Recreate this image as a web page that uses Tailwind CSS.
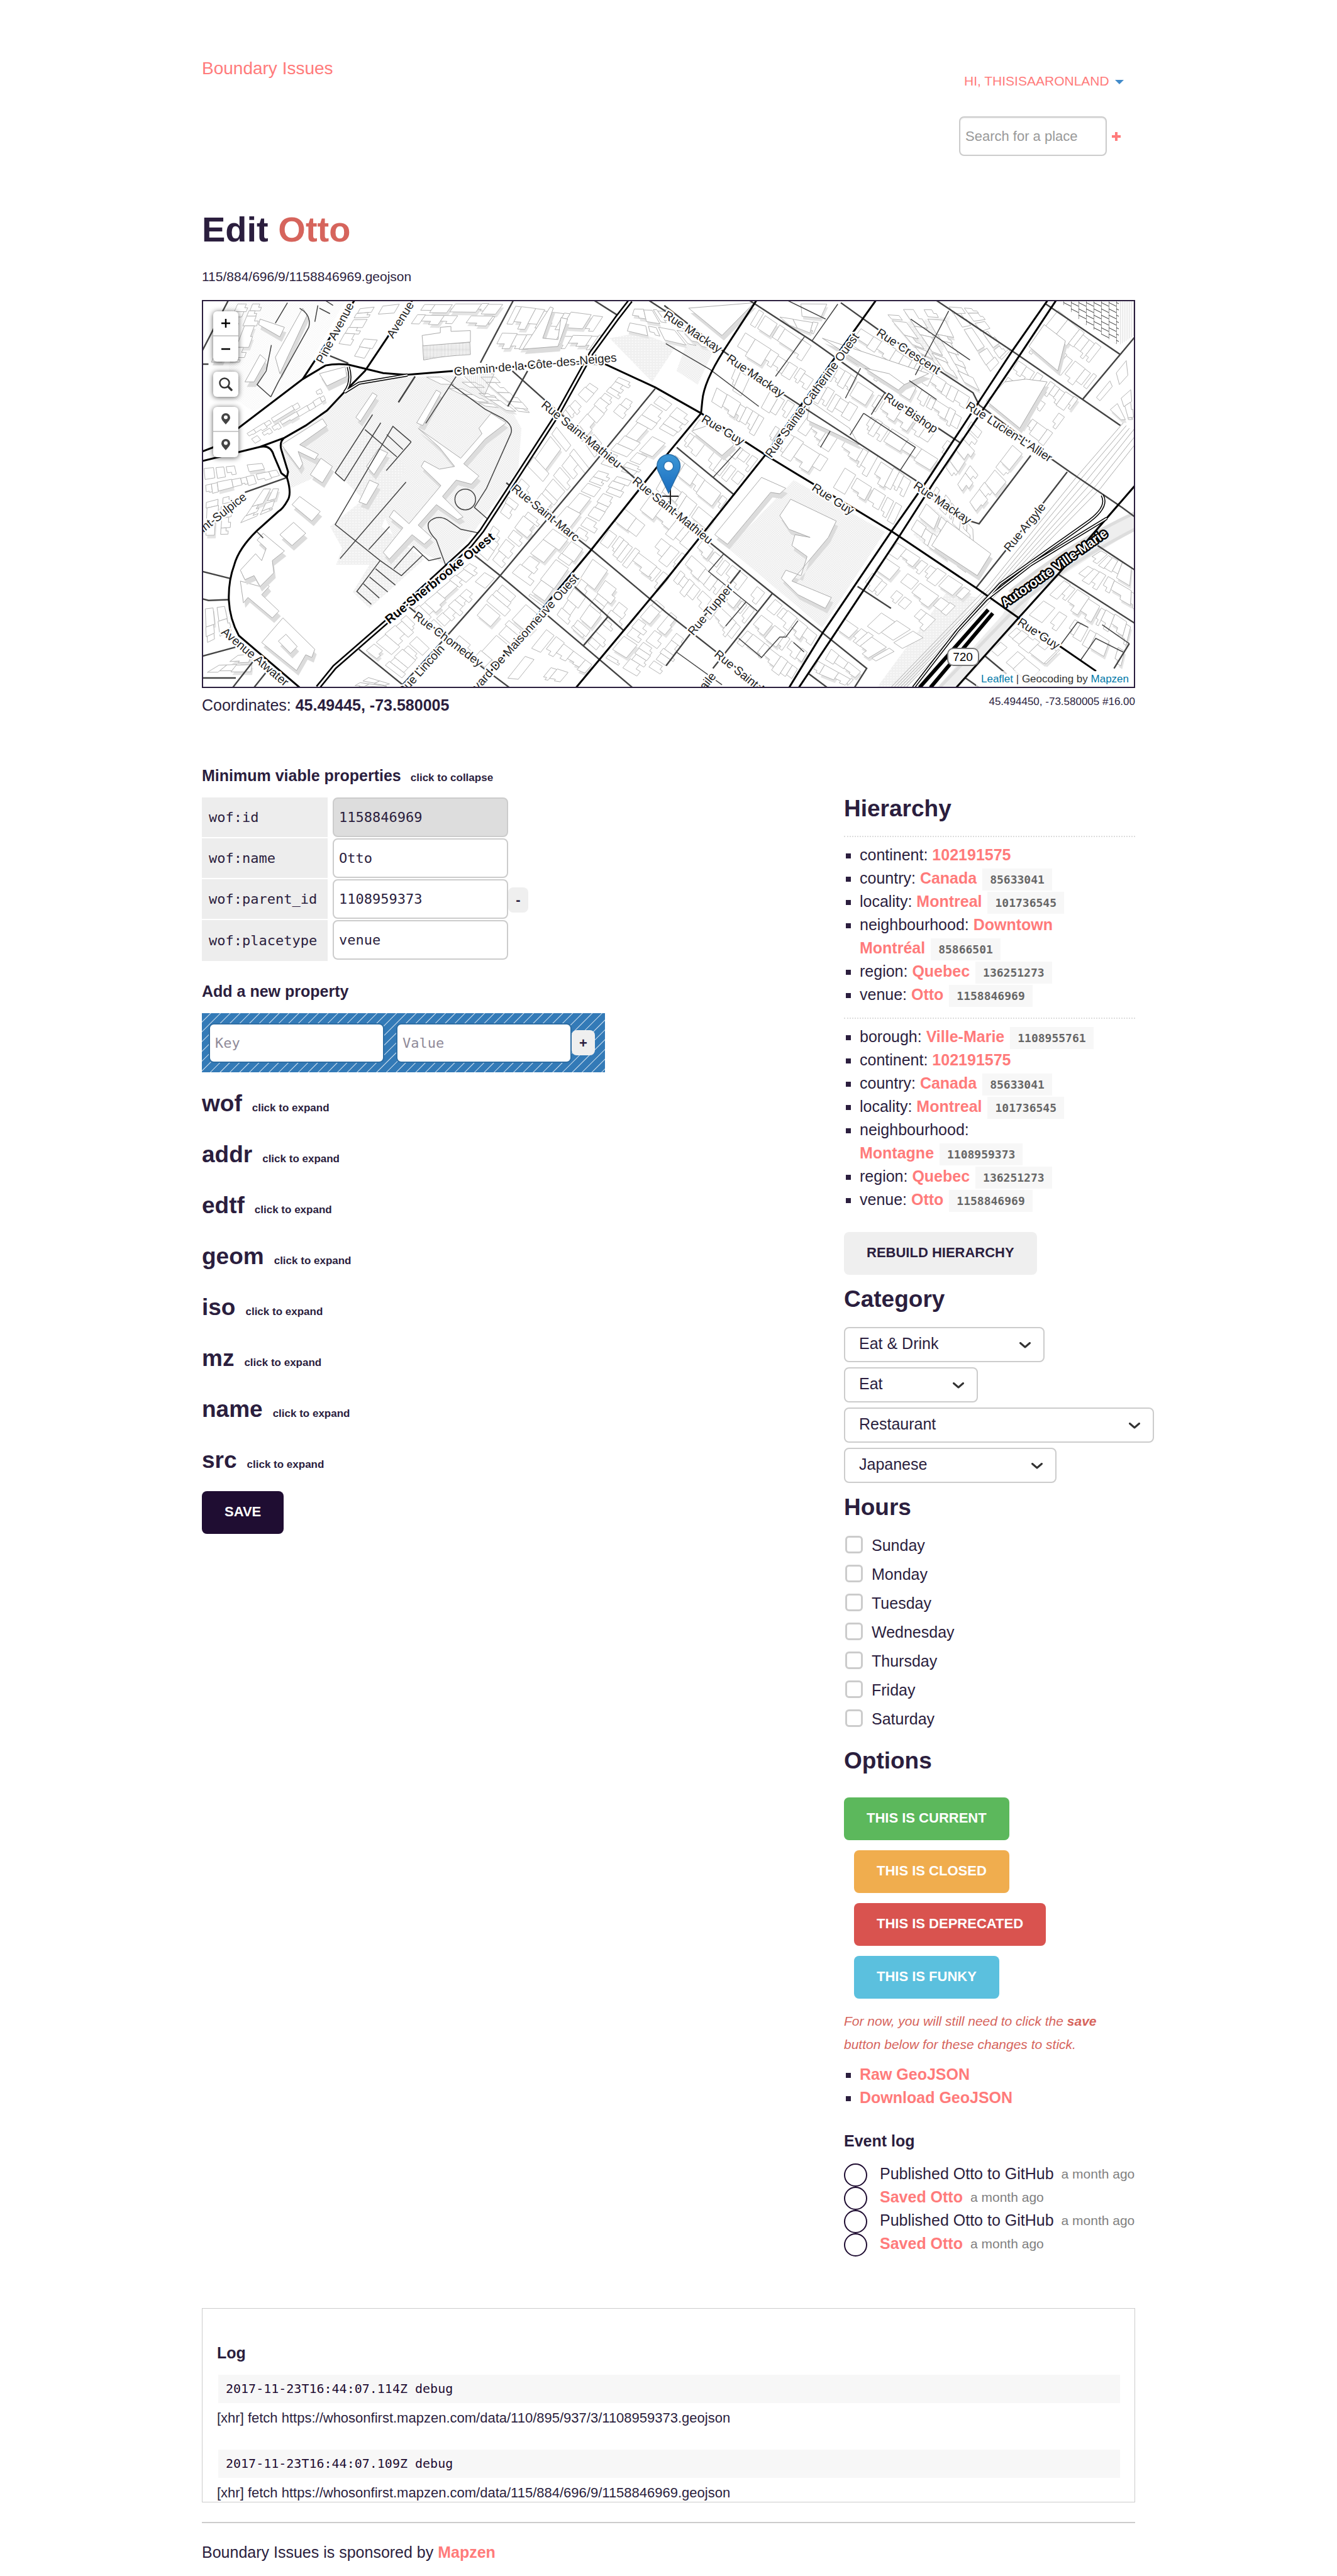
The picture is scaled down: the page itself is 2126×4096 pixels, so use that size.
<!DOCTYPE html>
<html lang="en">
<head>
<meta charset="utf-8">
<meta name="viewport" content="width=device-width, initial-scale=1">
<title>Boundary Issues: Edit Otto</title>
<script src="https://cdn.jsdelivr.net/npm/@tailwindcss/browser@4"></script>
</head>
<body class="bg-white font-['Liberation_Sans',Arial,sans-serif] text-[25px] leading-[37px] text-[#2b1e3e]">
<div class="mx-auto w-full max-w-[1484px] pb-4">

  <header class="flex items-start justify-between pt-[90px]">
    <a href="#" class="text-[28px] text-[#ff7b7b]">Boundary Issues</a>
    <div class="mt-5 w-[280px]">
      <button type="button" class="ml-2 flex items-center gap-[9px] text-[21px] text-[#ff7b7b]">HI, THISISAARONLAND
        <svg width="14" height="7" viewBox="0 0 14 7" class="mt-1" aria-hidden="true"><path d="M0 0h14L7 7z" fill="#428bca"/></svg>
      </button>
      <form class="mt-[38px] flex items-center gap-2">
        <input type="text" aria-label="Search for a place" placeholder="Search for a place" class="h-[63px] w-[235px] rounded-lg border-2 border-[#ccc] px-2 text-[22px] shadow-[inset_0_1px_2px_rgba(0,0,0,0.1)] placeholder:text-[#999]">
        <a href="#" aria-label="Add a place"><svg width="14" height="14" viewBox="0 0 14 14"><path d="M7 0v14M0 7h14" stroke="#ff7b7b" stroke-width="4"/></svg></a>
      </form>
    </div>
  </header>

  <h1 class="mt-20 text-[56px] font-bold leading-[74px]">Edit <span class="text-[#d6645c]">Otto</span></h1>
  <p class="mt-[19px] text-[21px] leading-[37px]">115/884/696/9/1158846969.geojson</p>

  <div class="relative mt-[19px] h-[617px] overflow-hidden border-2 border-[#2b1e3e]">
    <svg class="absolute inset-0 h-full w-full" aria-label="Street map of downtown Montreal" role="img">
      <defs>
        <pattern id="dots" width="8" height="8" patternUnits="userSpaceOnUse"><rect width="8" height="8" fill="#ebebeb"/><circle cx="2" cy="2" r="2" fill="#fff"/><circle cx="6" cy="6" r="2" fill="#fff"/></pattern>
        <pattern id="specks" width="8" height="8" patternUnits="userSpaceOnUse"><circle cx="2" cy="2" r="1.2" fill="#ddd"/><circle cx="6" cy="6" r="1.2" fill="#ddd"/></pattern>
        <pattern id="tiles" width="10" height="10" patternUnits="userSpaceOnUse"><rect width="10" height="10" fill="#f0f0f0"/><rect x="3" y="3" width="5" height="3" fill="#fff"/></pattern>
        <pattern id="mesh" width="5" height="5" patternUnits="userSpaceOnUse"><path d="M0 0h5M0 0v5" stroke="#888" stroke-width="1"/></pattern>
        <pattern id="hatch" width="3" height="4" patternUnits="userSpaceOnUse"><path d="M0 0v4" stroke="#bbb" stroke-width="1"/></pattern>
        <pattern id="grid" width="12" height="10" patternUnits="userSpaceOnUse"><path d="M0 0v10M0 2l12 6" stroke="#333" stroke-width="1"/></pattern>
        <linearGradient id="pin" x1="0" y1="0" x2="0" y2="1"><stop offset="0" stop-color="#3d97d6"/><stop offset="1" stop-color="#1a6cbf"/></linearGradient>
      </defs>

      <!-- parks and campus grounds -->
      <g transform="matrix(.4832 0 0 .4339 -6 -15)">
        <path fill="url(#specks)" d="M90 32H480L380 230L330 320L180 440L100 380Z"/>
        <path fill="url(#dots)" d="M480 370L545 320L850 305L1020 420L1060 500L1050 650L890 900L810 1000L640 900L560 700L440 650L300 720L270 560L420 440Z"/>
        <path fill="url(#tiles)" d="M560 500L680 640L600 860L740 980L560 1160L505 1100L560 1000L450 1000L470 940L430 860L540 760L440 650Z"/>
        <path fill="url(#tiles)" d="M1350 170L1450 150L1568 200L1490 330L1420 250Z"/>
        <path fill="url(#dots)" d="M1956 690L2256 880L2050 1230L1740 940Z"/>
        <path fill="url(#dots)" d="M1610 170L1690 220L1640 340L1570 290Z"/>
        <path fill="url(#tiles)" d="M2400 780L2470 840L2390 930L2350 890Z"/>
        <path fill="url(#tiles)" d="M2460 1100L2560 1120L2330 1450H2230Z"/>
        <path fill="url(#tiles)" d="M2330 110L2470 90L2440 260L2380 240Z"/>
      </g>
      <g id="buildings"></g>
      <g transform="matrix(.4832 0 0 .4339 -6 -15)" fill="#fff" stroke="#aaa" stroke-width="1">
        <path vector-effect="non-scaling-stroke" fill="url(#mesh)" d="M735 195L890 185L892 230Q800 235 738 250Z"/>
        <path vector-effect="non-scaling-stroke" d="M733 160L793 150V130L828 127V145L892 142V184L736 198Z"/>
        <path vector-effect="non-scaling-stroke" fill="url(#hatch)" d="M868 305L970 300L938 380Z"/>
      </g>
      <!-- larger buildings, each with a soft drop edge -->
      <g id="blocks"></g>
      <path fill="url(#grid)" d="M1362 0H1456V70L1400 35Z"/>
      <path fill="url(#hatch)" d="M1456 0H1480V55L1456 70Z"/>

      <!-- rail lines and freeway apron -->
      <g transform="matrix(.4832 0 0 .4339 736 -15)" fill="none">
        <path stroke="#eee" stroke-width="26" vector-effect="non-scaling-stroke" d="M1560 830Q1350 960 1180 1100L1130 1200L920 1460"/>
        <path stroke="#ddd" stroke-width="5" vector-effect="non-scaling-stroke" d="M1543 870Q1300 1010 1160 1150L900 1450M1543 810Q1330 920 1130 1100"/>
        <g stroke="#aaa" stroke-width="1">
          <path vector-effect="non-scaling-stroke" d="M1505 480L1350 680L1060 1080L740 1450"/><path vector-effect="non-scaling-stroke" d="M1515 490L1370 680L1070 1085L750 1450"/><path vector-effect="non-scaling-stroke" d="M1525 500L1385 690L1080 1085L760 1450"/><path vector-effect="non-scaling-stroke" d="M1543 500L1400 700L1090 1085L770 1450"/><path vector-effect="non-scaling-stroke" d="M1543 530L1415 710L1095 1090L780 1450"/><path vector-effect="non-scaling-stroke" d="M1543 560L1430 720L1100 1095L790 1450"/>
        </g>
      </g>

      <!-- lanes -->
      <g transform="matrix(.4832 0 0 .4339 -6 -15)" fill="none" stroke="#444" stroke-width="1.5">
        <path vector-effect="non-scaling-stroke" d="M845 310L745 482M830 340L940 430L1000 465Q1035 490 1025 520L945 720L905 790L948 832M570 450L447 663L477 693L597 480M545 505L650 605M617 523L670 578M697 550L615 655M697 550L637 493L447 853L595 985L665 1040L735 965L755 985L795 975M680 697L463 978M626 860L557 945M595 985L518 1098L566 1145M540 1070L592 1122M560 1045L620 1100M580 1015L645 1075M640 1015L705 933L735 965M810 1000L780 910Q745 870 755 845Q780 815 815 835L860 870L925 885"/>
        <ellipse vector-effect="non-scaling-stroke" cx="875" cy="761" rx="34" ry="38"/>
        <path vector-effect="non-scaling-stroke" d="M330 60Q370 85 360 130L260 330L235 385M290 40L250 115M237 195L220 290L190 340L235 385M430 80L395 60M415 32L440 50M390 50L380 110M190 880L210 902M1535 190L1681 285L1841 420M1991 165L1896 310M2176 280L2126 390M2186 445L2141 525M2186 445L2356 570L2306 655M2256 370L2211 450M2101 45L2016 180M1936 32L2061 100M2341 100L2536 250M2466 70L2356 305M2336 325L2426 395M2076 510L2044 570M1781 570L1691 680M1726 960L1676 1025L1836 1170M1800 1135L1732 1225M1775 1270L1850 1340L1910 1265L1930 1265L1970 1205M1955 1285L1990 1320M2971 1220L3061 1290M2890 1210L2830 1300M2890 1210L2925 1230M2900 1350L2950 1270L3040 1320M1570 1320L1720 1440"/>
      </g>
      <!-- local streets -->
      <g transform="matrix(.4832 0 0 .4339 -6 -15)" fill="none" stroke="#444" stroke-width="2.4">
        <path vector-effect="non-scaling-stroke" d="M1033 32L925 260M1300 32L1375 85M1030 290L1135 395L1435 685L1681 920L1886 1105L2051 1250L2196 1380L2156 1450M1010 700L1290 945L1536 1175L1696 1315L1850 1450M905 965L990 1040L1150 1190L1425 1450M1235 1080L1395 1240M1345 1190L1265 1295M1500 355L1290 640L990 1040L800 1280L660 1450M525 1310L680 1450M690 1155L930 1375L1020 1450M710 310L655 405M1080 290L1015 420M1480 32L1560 90"/>
        <path vector-effect="non-scaling-stroke" d="M10 215L95 32M10 265L30 265M10 1025L100 1050M10 1125L30 1131L95 1128M10 1335L120 1302M150 735L285 682M110 1450L180 1350M180 1450L230 1380M10 1415L120 1415M430 235L490 262"/>
        <path vector-effect="non-scaling-stroke" d="M1811 32L2016 180L2256 370L2506 555M1530 50L1721 215L1921 375L2356 690L2536 840L2566 850L2736 600M2111 40L2236 140L2436 290L2546 370L2566 415L2801 610L2871 665L3036 790L3079 825M2426 32L2686 225L3031 490M2786 45L3031 230M3079 165L2906 395M2856 660L2766 790L2556 1085M1571 570L1761 745M1886 1105L1690 1380M1781 1020L1611 1260L1536 1370M2166 1080L2276 1160M2006 1400L2066 1450M2826 1035L3079 1215M2956 930L3079 1020M2586 1335L2656 1400M2521 1415L2566 1450M3060 1290L3010 1380"/>
      </g>
      <!-- main streets -->
      <g transform="matrix(.4832 0 0 .4339 -6 -15)" fill="none" stroke="#000" stroke-width="3">
        <path vector-effect="non-scaling-stroke" d="M10 585L45 570L340 320L415 270Q450 262 490 267L605 298L680 304L840 290L1200 262L1335 265L1500 350L1651 445L1866 600L2281 880L2556 1085L2696 1195L2951 1390"/>
        <path vector-effect="non-scaling-stroke" d="M10 620L200 568L280 535L350 490L420 435L475 370L545 290L700 32M340 320L510 32M200 568Q235 560 245 600L270 665L288 680M280 535Q262 550 270 580L292 660L288 680Q305 740 290 765Q275 795 260 805L190 875Q130 940 115 1000Q95 1060 97 1130Q100 1200 130 1260L330 1450"/>
        <path vector-effect="non-scaling-stroke" d="M1833 32L1726 215Q1660 330 1655 400L1651 445L1536 600L1290 945L915 1450M2226 32L1861 600L1661 880L1536 1055L1240 1450M3079 710L2826 1035L2696 1195L2491 1450M2791 32L2676 215L2396 690L2276 880L2051 1250L1941 1450M2819 32L2701 230L2416 700L2301 900L2081 1270L1973 1450"/>
      </g>
      <!-- divided roads: black casing with a white centre -->
      <g transform="matrix(.4832 0 0 .4339 -6 -15)" fill="none">
        <path stroke="#000" stroke-width="8" vector-effect="non-scaling-stroke" d="M1419 32L1375 95L1290 225L1178 450L1015 730L930 875L890 930L615 1210L445 1375L390 1450"/>
        <path stroke="#fff" stroke-width="3" vector-effect="non-scaling-stroke" d="M1419 32L1375 95L1290 225L1178 450L1015 730L930 875L890 930L615 1210L445 1375L390 1450"/>
        <path stroke="#000" stroke-width="5" vector-effect="non-scaling-stroke" d="M490 275Q505 330 478 368L525 335L685 305M2971 745Q2995 790 2916 850L2636 1070L2496 1240L2350 1450M2986 830L2736 1000L2586 1130"/>
        <path stroke="#fff" stroke-width="2" vector-effect="non-scaling-stroke" d="M490 275Q505 330 478 368L525 335L685 305M2971 745Q2995 790 2916 850L2636 1070L2496 1240L2350 1450M2986 830L2736 1000L2586 1130"/>
        <path stroke="#000" stroke-width="6" vector-effect="non-scaling-stroke" d="M2596 1165L2370 1450M2611 1178L2406 1450"/>
      </g>

      <!-- street names -->
      <g font-size="19" text-anchor="middle" fill="#222" stroke="#fff" stroke-width="5" stroke-linejoin="round" paint-order="stroke">
        <text transform="translate(209 50) rotate(-62)" dy="7">Pine Avenue</text>
        <text transform="translate(313 29) rotate(-58)" dy="7">Avenue</text>
        <text transform="translate(528 100) rotate(-5)" dy="7">Chemin de la Côte-des-Neiges</text>
        <text transform="translate(602 211) rotate(39)" dy="7">Rue Saint-Mathieu</text>
        <text transform="translate(747 332) rotate(39)" dy="7">Rue Saint-Mathieu</text>
        <text transform="translate(545 336) rotate(39)" dy="7">Rue Saint-Marc</text>
        <text transform="translate(390 537) rotate(37)" dy="7">Rue Chomedey</text>
        <text transform="translate(346 586) rotate(-48)" dy="7">Rue Lincoln</text>
        <text transform="translate(593 436) rotate(-48)" dy="7" text-anchor="end">Boulevard De Maisonneuve Ouest</text>
        <text transform="translate(83 565) rotate(40)" dy="7">Avenue Atwater</text>
        <text transform="translate(66 308) rotate(-38)" dy="7" text-anchor="end">Chemin Saint-Sulpice</text>
        <text transform="translate(779 48) rotate(33)" dy="7">Rue Mackay</text>
        <text transform="translate(879 118) rotate(34)" dy="7">Rue Mackay</text>
        <text transform="translate(1176 320) rotate(34)" dy="7">Rue Mackay</text>
        <text transform="translate(968 149) rotate(-54)" dy="7">Rue Sainte-Catherine Ouest</text>
        <text transform="translate(1122 79) rotate(33)" dy="7">Rue Crescent</text>
        <text transform="translate(1126 177) rotate(34)" dy="7">Rue Bishop</text>
        <text transform="translate(827 204) rotate(31)" dy="7">Rue Guy</text>
        <text transform="translate(1002 314) rotate(33)" dy="7">Rue Guy</text>
        <text transform="translate(1329 528) rotate(33)" dy="7">Rue Guy</text>
        <text transform="translate(1282 207) rotate(33)" dy="7">Rue Lucien-L'Allier</text>
        <text transform="translate(1306 359) rotate(-51)" dy="7">Rue Argyle</text>
        <text transform="translate(806 490) rotate(-50)" dy="7">Rue Tupper</text>
        <text transform="translate(816 558) rotate(39)" dy="7" text-anchor="start">Rue Saint-Marc</text>
        <text transform="translate(811 592) rotate(-52)" dy="7" text-anchor="end">Rue Baile</text>
        <g font-weight="bold" font-size="20">
          <text transform="translate(376 440) rotate(-39)" dy="7" fill="#000">Rue Sherbrooke Ouest</text>
          <text transform="translate(1353 424) rotate(-35)" dy="7" fill="#fff" stroke="#000">Autoroute Ville-Marie</text>
        </g>
      </g>
      <rect x="1184" y="552" width="49" height="27" rx="9" fill="#fff" stroke="#777" stroke-width="2"/>
      <text x="1208" y="572" font-size="19" text-anchor="middle" fill="#000">720</text>

      <path d="M743 297v26M730 310h26" stroke="#222" stroke-width="2"/>
      <g transform="translate(721 243) scale(1.53)">
        <path d="M12.500 .5C5.800.5.500 5.800.500 12.500c0 2.800 1.100 5.300 2.200 7.400L12.500 40.500l9.800-20.600c1.100-2.100 2.200-4.600 2.200-7.400C24.500 5.800 19.200.5 12.500.5z" fill="url(#pin)" stroke="#2a6ea8" stroke-width="1"/>
        <circle cx="12.500" cy="12.500" r="5" fill="#fff" stroke="#2a74b3"/>
      </g>
    </svg>

    <div class="absolute left-4 top-4 flex w-10 flex-col gap-4 text-black">
      <div class="flex flex-col divide-y-2 divide-[#ccc] rounded-md bg-white shadow-[0_1px_8px_rgba(0,0,0,0.65)]">
        <button type="button" aria-label="Zoom in" class="flex h-10 items-center justify-center"><svg width="14" height="14" viewBox="0 0 14 14"><path d="M7 0v14M0 7h14" stroke="#000" stroke-width="2.500"/></svg></button>
        <button type="button" aria-label="Zoom out" class="flex h-10 items-center justify-center"><svg width="14" height="14" viewBox="0 0 14 14"><path d="M0 7h14" stroke="#000" stroke-width="2.500"/></svg></button>
      </div>
      <button type="button" aria-label="Search the map" class="flex h-10 items-center justify-center rounded-md bg-white shadow-[0_1px_8px_rgba(0,0,0,0.65)]"><svg width="22" height="22" viewBox="0 0 22 22" fill="none" stroke="#333"><circle cx="9" cy="9" r="7.500" stroke-width="2.500"/><path d="M15 15l5 5" stroke-width="3.500" stroke-linecap="round"/></svg></button>
      <div class="flex flex-col divide-y-2 divide-[#ccc] rounded-md bg-white shadow-[0_1px_8px_rgba(0,0,0,0.65)]">
        <button type="button" aria-label="Drop a pin" class="flex h-10 items-center justify-center"><svg width="14" height="18" viewBox="0 0 14 18"><path fill="#444" fill-rule="evenodd" d="M7 0a7 7 0 0 1 7 7c0 4-4 7-7 11C4 14 0 11 0 7a7 7 0 0 1 7-7zm0 3.500a3 3 0 1 0 0 6 3 3 0 0 0 0-6z"/></svg></button>
        <button type="button" aria-label="Move the pin" class="flex h-10 items-center justify-center"><svg width="14" height="18" viewBox="0 0 14 18"><path fill="#444" fill-rule="evenodd" d="M7 0a7 7 0 0 1 7 7c0 4-4 7-7 11C4 14 0 11 0 7a7 7 0 0 1 7-7zm0 3.500a3 3 0 1 0 0 6 3 3 0 0 0 0-6z"/></svg></button>
      </div>
    </div>
    <p class="absolute bottom-0 right-0 bg-white/70 px-2 text-[17px] leading-[25px] text-[#333]"><a href="#" class="text-[#0078a8]">Leaflet</a> | Geocoding by <a href="#" class="text-[#0078a8]">Mapzen</a></p>
  </div>

  <div class="mt-[9px] flex items-start justify-between">
    <p>Coordinates: <strong>45.49445, -73.580005</strong></p>
    <p class="text-[17px] leading-[26px]">45.494450, -73.580005 #16.00</p>
  </div>

  <main class="mt-[75px] flex items-start justify-between">
    <form>
      <h2 class="flex items-baseline gap-[15px] font-bold">Minimum viable properties <button type="button" class="text-[17px] leading-none">click to collapse</button></h2>
      <table class="mt-4 border-separate border-spacing-0 text-[22px] leading-[37px]">
        <tbody class="font-['DejaVu_Sans_Mono',monospace]">
          <tr>
            <th scope="row" class="w-[200px] border-b-2 border-white bg-[#ededed] p-0 px-[11px] text-left font-normal"><label for="p1">wof:id</label></th>
            <td class="p-0 pb-0.5 pl-2"><input id="p1" value="1158846969" readonly class="block h-[63px] w-[279px] rounded-lg border-2 border-[#ccc] bg-[#ddd] px-2"></td>
            <td class="p-0"></td>
          </tr>
          <tr>
            <th scope="row" class="w-[200px] border-b-2 border-white bg-[#ededed] p-0 px-[11px] text-left font-normal"><label for="p2">wof:name</label></th>
            <td class="p-0 pb-0.5 pl-2"><input id="p2" value="Otto" class="block h-[63px] w-[279px] rounded-lg border-2 border-[#ccc] px-2"></td>
            <td class="p-0"></td>
          </tr>
          <tr>
            <th scope="row" class="w-[200px] border-b-2 border-white bg-[#ededed] p-0 px-[11px] text-left font-normal"><label for="p3">wof:parent_id</label></th>
            <td class="p-0 pb-0.5 pl-2"><input id="p3" value="1108959373" class="block h-[63px] w-[279px] rounded-lg border-2 border-[#ccc] px-2"></td>
            <td class="p-0"><button type="button" aria-label="Remove wof:parent_id" class="block h-10 w-8 rounded-lg bg-[#efefef] font-['Liberation_Sans',Arial,sans-serif] text-[22px] font-bold">-</button></td>
          </tr>
          <tr>
            <th scope="row" class="w-[200px] bg-[#ededed] p-0 px-[11px] text-left font-normal"><label for="p4">wof:placetype</label></th>
            <td class="p-0 pb-0.5 pl-2"><input id="p4" value="venue" class="block h-[63px] w-[279px] rounded-lg border-2 border-[#ccc] px-2"></td>
            <td class="p-0"></td>
          </tr>
        </tbody>
      </table>

      <h2 class="mt-[30px] font-bold">Add a new property</h2>
      <div class="mt-4 flex h-[94px] w-[641px] items-center bg-[#337ab7] bg-[repeating-linear-gradient(135deg,transparent_0px,transparent_9px,rgba(255,255,255,0.8)_10px,transparent_11px)] pl-[11px] text-[22px]">
        <input aria-label="Key" placeholder="Key" class="h-[63px] w-[279px] rounded-lg border-2 border-[#2d6da3] bg-white px-2 font-['DejaVu_Sans_Mono',monospace] placeholder:text-[#8f8a99]">
        <input aria-label="Value" placeholder="Value" class="ml-[19px] h-[63px] w-[279px] rounded-lg border-2 border-[#2d6da3] bg-white px-2 font-['DejaVu_Sans_Mono',monospace] placeholder:text-[#8f8a99]">
        <button type="button" aria-label="Add property" class="h-10 w-[37px] rounded-lg bg-[#efefef] font-bold">+</button>
      </div>

      <div class="mt-[27px] flex flex-col gap-9 text-[37px] font-bold leading-[45px]">
        <h3 class="flex items-baseline gap-4">wof <button type="button" class="text-[17px] leading-none">click to expand</button></h3>
        <h3 class="flex items-baseline gap-4">addr <button type="button" class="text-[17px] leading-none">click to expand</button></h3>
        <h3 class="flex items-baseline gap-4">edtf <button type="button" class="text-[17px] leading-none">click to expand</button></h3>
        <h3 class="flex items-baseline gap-4">geom <button type="button" class="text-[17px] leading-none">click to expand</button></h3>
        <h3 class="flex items-baseline gap-4">iso <button type="button" class="text-[17px] leading-none">click to expand</button></h3>
        <h3 class="flex items-baseline gap-4">mz <button type="button" class="text-[17px] leading-none">click to expand</button></h3>
        <h3 class="flex items-baseline gap-4">name <button type="button" class="text-[17px] leading-none">click to expand</button></h3>
        <h3 class="flex items-baseline gap-4">src <button type="button" class="text-[17px] leading-none">click to expand</button></h3>
      </div>
      <button type="submit" class="mt-[27px] h-[68px] rounded-lg bg-[#1f0d32] px-9 pb-1 text-[22px] font-bold text-white">SAVE</button>
    </form>

    <aside class="w-[463px] shrink-0 pt-12">
      <h2 class="text-[37px] font-bold leading-[45px]">Hierarchy</h2>
      <ul class="mt-[21px] list-[square] border-t-2 border-dotted border-[#ddd] pb-[18px] pl-[25px] pr-4 pt-[10px]">
        <li>continent: <a href="#" class="font-bold text-[#ff7b7b]">102191575</a></li>
        <li>country: <a href="#" class="font-bold text-[#ff7b7b]">Canada</a>&nbsp;<code class="ml-0.5 bg-[#f7f7f7] px-3 py-[7px] font-['DejaVu_Sans_Mono',monospace] text-lg/[20px] font-bold text-[#666]">85633041</code></li>
        <li>locality: <a href="#" class="font-bold text-[#ff7b7b]">Montreal</a>&nbsp;<code class="ml-0.5 bg-[#f7f7f7] px-3 py-[7px] font-['DejaVu_Sans_Mono',monospace] text-lg/[20px] font-bold text-[#666]">101736545</code></li>
        <li>neighbourhood: <a href="#" class="font-bold text-[#ff7b7b]">Downtown Montréal</a>&nbsp;<code class="ml-0.5 bg-[#f7f7f7] px-3 py-[7px] font-['DejaVu_Sans_Mono',monospace] text-lg/[20px] font-bold text-[#666]">85866501</code></li>
        <li>region: <a href="#" class="font-bold text-[#ff7b7b]">Quebec</a>&nbsp;<code class="ml-0.5 bg-[#f7f7f7] px-3 py-[7px] font-['DejaVu_Sans_Mono',monospace] text-lg/[20px] font-bold text-[#666]">136251273</code></li>
        <li>venue: <a href="#" class="font-bold text-[#ff7b7b]">Otto</a>&nbsp;<code class="ml-0.5 bg-[#f7f7f7] px-3 py-[7px] font-['DejaVu_Sans_Mono',monospace] text-lg/[20px] font-bold text-[#666]">1158846969</code></li>
      </ul>
      <ul class="list-[square] border-t-2 border-dotted border-[#ddd] pl-[25px] pr-4 pt-[10px]">
        <li>borough: <a href="#" class="font-bold text-[#ff7b7b]">Ville-Marie</a>&nbsp;<code class="ml-0.5 bg-[#f7f7f7] px-3 py-[7px] font-['DejaVu_Sans_Mono',monospace] text-lg/[20px] font-bold text-[#666]">1108955761</code></li>
        <li>continent: <a href="#" class="font-bold text-[#ff7b7b]">102191575</a></li>
        <li>country: <a href="#" class="font-bold text-[#ff7b7b]">Canada</a>&nbsp;<code class="ml-0.5 bg-[#f7f7f7] px-3 py-[7px] font-['DejaVu_Sans_Mono',monospace] text-lg/[20px] font-bold text-[#666]">85633041</code></li>
        <li>locality: <a href="#" class="font-bold text-[#ff7b7b]">Montreal</a>&nbsp;<code class="ml-0.5 bg-[#f7f7f7] px-3 py-[7px] font-['DejaVu_Sans_Mono',monospace] text-lg/[20px] font-bold text-[#666]">101736545</code></li>
        <li>neighbourhood: <a href="#" class="font-bold text-[#ff7b7b]">Montagne</a>&nbsp;<code class="ml-0.5 bg-[#f7f7f7] px-3 py-[7px] font-['DejaVu_Sans_Mono',monospace] text-lg/[20px] font-bold text-[#666]">1108959373</code></li>
        <li>region: <a href="#" class="font-bold text-[#ff7b7b]">Quebec</a>&nbsp;<code class="ml-0.5 bg-[#f7f7f7] px-3 py-[7px] font-['DejaVu_Sans_Mono',monospace] text-lg/[20px] font-bold text-[#666]">136251273</code></li>
        <li>venue: <a href="#" class="font-bold text-[#ff7b7b]">Otto</a>&nbsp;<code class="ml-0.5 bg-[#f7f7f7] px-3 py-[7px] font-['DejaVu_Sans_Mono',monospace] text-lg/[20px] font-bold text-[#666]">1158846969</code></li>
      </ul>
      <button type="button" class="mt-[33px] block h-[68px] rounded-lg bg-[#efefef] px-9 pb-1 text-[22px] font-bold">REBUILD HIERARCHY</button>

      <h2 class="mt-4 text-[37px] font-bold leading-[45px]">Category</h2>
      <div class="mt-[22px] flex flex-col items-start gap-2">
        <div class="relative"><select aria-label="Category" class="block h-14 w-[319px] appearance-none rounded-lg border-2 border-[#ccc] bg-white pb-1 pl-[22px] pr-14"><option>Eat &amp; Drink</option></select><svg class="pointer-events-none absolute right-[22px] top-6" width="18" height="10" viewBox="0 0 18 10" fill="none" stroke="#333" stroke-width="3" stroke-linecap="round" stroke-linejoin="round"><path d="M1.500 1.500L9 8l7.500-6.500"/></svg></div>
        <div class="relative"><select aria-label="Subcategory" class="block h-14 w-[213px] appearance-none rounded-lg border-2 border-[#ccc] bg-white pb-1 pl-[22px] pr-14"><option>Eat</option></select><svg class="pointer-events-none absolute right-[22px] top-6" width="18" height="10" viewBox="0 0 18 10" fill="none" stroke="#333" stroke-width="3" stroke-linecap="round" stroke-linejoin="round"><path d="M1.500 1.500L9 8l7.500-6.500"/></svg></div>
        <div class="relative"><select aria-label="Venue type" class="block h-14 w-[493px] appearance-none rounded-lg border-2 border-[#ccc] bg-white pb-1 pl-[22px] pr-14"><option>Restaurant</option></select><svg class="pointer-events-none absolute right-[22px] top-6" width="18" height="10" viewBox="0 0 18 10" fill="none" stroke="#333" stroke-width="3" stroke-linecap="round" stroke-linejoin="round"><path d="M1.500 1.500L9 8l7.500-6.500"/></svg></div>
        <div class="relative"><select aria-label="Cuisine" class="block h-14 w-[338px] appearance-none rounded-lg border-2 border-[#ccc] bg-white pb-1 pl-[22px] pr-14"><option>Japanese</option></select><svg class="pointer-events-none absolute right-[22px] top-6" width="18" height="10" viewBox="0 0 18 10" fill="none" stroke="#333" stroke-width="3" stroke-linecap="round" stroke-linejoin="round"><path d="M1.500 1.500L9 8l7.500-6.500"/></svg></div>
      </div>

      <h2 class="mt-4 text-[37px] font-bold leading-[45px]">Hours</h2>
      <div class="mt-[15px] flex flex-col pl-0.5 leading-[46px]">
        <label class="flex items-start gap-3.5"><input type="checkbox" class="mt-2 size-7 appearance-none rounded-md border-3 border-[#ccc]">Sunday</label>
        <label class="flex items-start gap-3.5"><input type="checkbox" class="mt-2 size-7 appearance-none rounded-md border-3 border-[#ccc]">Monday</label>
        <label class="flex items-start gap-3.5"><input type="checkbox" class="mt-2 size-7 appearance-none rounded-md border-3 border-[#ccc]">Tuesday</label>
        <label class="flex items-start gap-3.5"><input type="checkbox" class="mt-2 size-7 appearance-none rounded-md border-3 border-[#ccc]">Wednesday</label>
        <label class="flex items-start gap-3.5"><input type="checkbox" class="mt-2 size-7 appearance-none rounded-md border-3 border-[#ccc]">Thursday</label>
        <label class="flex items-start gap-3.5"><input type="checkbox" class="mt-2 size-7 appearance-none rounded-md border-3 border-[#ccc]">Friday</label>
        <label class="flex items-start gap-3.5"><input type="checkbox" class="mt-2 size-7 appearance-none rounded-md border-3 border-[#ccc]">Saturday</label>
      </div>

      <h2 class="mt-[21px] text-[37px] font-bold leading-[45px]">Options</h2>
      <div class="mt-9 flex flex-col items-start gap-4 text-[22px] font-bold text-white">
        <button type="button" class="h-[68px] rounded-lg bg-[#5cb85c] px-9 pb-1">THIS IS CURRENT</button>
        <button type="button" class="ml-4 h-[68px] rounded-lg bg-[#f0ad4e] px-9 pb-1">THIS IS CLOSED</button>
        <button type="button" class="ml-4 h-[68px] rounded-lg bg-[#d9534f] px-9 pb-1">THIS IS DEPRECATED</button>
        <button type="button" class="ml-4 h-[68px] rounded-lg bg-[#5bc0de] px-9 pb-1">THIS IS FUNKY</button>
      </div>
      <p class="mt-[17px] pr-10 text-[21px] italic leading-[37px] text-[#d6645c]">For now, you will still need to click the <strong>save</strong> button below for these changes to stick.</p>
      <ul class="mt-[11px] list-[square] pl-[25px] font-bold">
        <li><a href="#" class="text-[#ff7b7b]">Raw GeoJSON</a></li>
        <li><a href="#" class="text-[#ff7b7b]">Download GeoJSON</a></li>
      </ul>

      <h3 class="mt-8 font-bold">Event log</h3>
      <ul class="mt-[17px] whitespace-nowrap leading-[33px]">
        <li class="flex h-[37px] items-start"><span class="mr-5 size-[37px] shrink-0 rounded-full border-2 border-[#1f0d32]"></span><span>Published Otto to GitHub</span><span class="ml-3 text-[21px] text-[#808080]">a month ago</span></li>
        <li class="flex h-[37px] items-start"><span class="mr-5 size-[37px] shrink-0 rounded-full border-2 border-[#1f0d32]"></span><a href="#" class="font-bold text-[#ff7b7b]">Saved Otto</a><span class="ml-3 text-[21px] text-[#808080]">a month ago</span></li>
        <li class="flex h-[37px] items-start"><span class="mr-5 size-[37px] shrink-0 rounded-full border-2 border-[#1f0d32]"></span><span>Published Otto to GitHub</span><span class="ml-3 text-[21px] text-[#808080]">a month ago</span></li>
        <li class="flex h-[37px] items-start"><span class="mr-5 size-[37px] shrink-0 rounded-full border-2 border-[#1f0d32]"></span><a href="#" class="font-bold text-[#ff7b7b]">Saved Otto</a><span class="ml-3 text-[21px] text-[#808080]">a month ago</span></li>
      </ul>
    </aside>
  </main>

  <section class="mt-[82px] h-[309px] overflow-hidden border border-[#ccc] px-[23px] pt-[52px]">
    <h3 class="font-bold">Log</h3>
    <pre class="mt-4 ml-0.5 bg-[#f7f7f7] px-3 font-['DejaVu_Sans_Mono',monospace] text-xl leading-[45px] text-[#1f0d32]">2017-11-23T16:44:07.114Z debug</pre>
    <p class="mt-[5px] text-[22px]">[xhr] fetch https://whosonfirst.mapzen.com/data/110/895/937/3/1108959373.geojson</p>
    <pre class="mt-8 ml-0.5 bg-[#f7f7f7] px-3 font-['DejaVu_Sans_Mono',monospace] text-xl leading-[45px] text-[#1f0d32]">2017-11-23T16:44:07.109Z debug</pre>
    <p class="mt-[5px] text-[22px]">[xhr] fetch https://whosonfirst.mapzen.com/data/115/884/696/9/1158846969.geojson</p>
  </section>

  <footer class="mt-[31px] border-t-2 border-[#ccc] pt-7">Boundary Issues is sponsored by <a href="#" class="font-bold text-[#ff7b7b]">Mapzen</a></footer>
</div>

<script>
// Building footprints: city blocks are split into lots with a seeded generator,
// so that every load draws the same map.
(function () {
  var NS = 'http://www.w3.org/2000/svg';
  var seed = 7;
  function rnd() { seed = (seed * 16807) % 2147483647; return seed / 2147483647; }
  function pt(x, y) { return [x * 0.4832 - 6, y * 0.4339 - 15]; }
  function poly(parent, pts, fill, stroke) {
    var p = document.createElementNS(NS, 'path');
    p.setAttribute('d', 'M' + pts.map(function (q) { return q[0].toFixed(1) + ' ' + q[1].toFixed(1); }).join('L') + 'Z');
    p.setAttribute('fill', fill);
    if (stroke) p.setAttribute('stroke', stroke);
    parent.appendChild(p);
  }
  function shift(pts, dx, dy) { return pts.map(function (q) { return [q[0] + dx, q[1] + dy]; }); }
  function dist(a, b) { return Math.hypot(a[0] - b[0], a[1] - b[1]); }
  var lots = document.getElementById('buildings');
  var quads = [
    [1841,55,2076,235,1986,385,1751,225],[1736,240,1966,410,1871,575,1671,430],[1850,40,2070,40,2016,170,1950,130],
    [2236,60,2440,60,2576,370,2386,250],[2460,50,2560,60,2671,215,2600,300],[2176,120,2551,385,2501,530,2096,240],
    [2081,250,2486,550,2406,670,2006,400],[1996,415,2356,690,2286,860,1881,590],[2430,700,2546,860,2556,1070,2326,890],
    [2450,640,2556,430,2736,600,2566,830],[2696,240,2896,390,2776,570,2596,420],[2826,60,3010,230,2906,380,2711,220],
    [2940,400,3070,220,3079,470,3030,470],[2296,910,2546,1090,2396,1260,2176,1075],[2176,1110,2396,1270,2216,1370,2081,1260],
    [2066,1285,2180,1390,2130,1450,2010,1400],[1656,900,1876,1100,1746,1290,1546,1070],[1896,1120,2041,1250,1940,1440,1760,1290],
    [1646,460,1846,605,1761,730,1581,560],[1566,590,1746,750,1656,890,1490,740],[2846,1050,3070,1215,3030,1400,2716,1190],
    [2976,940,3079,1010,3079,1180,2846,1030],[2596,1320,2706,1210,2836,1310,2720,1440],
    [1320,280,1490,360,1300,620,1190,440],[1510,370,1630,460,1440,680,1310,630],[1170,480,1290,650,1150,830,1030,710],
    [1310,650,1430,690,1290,930,1160,840],[1450,700,1660,890,1500,1100,1300,940],[1010,740,1140,850,990,1030,910,950],
    [1160,860,1280,950,1150,1170,1000,1050],[1290,970,1470,1120,1320,1330,1170,1180],[1500,1120,1640,1250,1500,1450,1330,1340],
    [890,990,980,1050,800,1270,700,1160],[990,1060,1140,1200,960,1400,830,1280],[1150,1220,1300,1360,1230,1450,1000,1430],
    [680,1180,780,1290,670,1420,540,1310],[1040,40,1370,90,1290,220,950,240],[740,40,1010,40,950,130,690,120],
    [520,60,670,40,560,250,440,220],[1430,60,1540,60,1700,230,1400,150],[150,520,400,350,420,400,180,560],
    [10,640,240,620,270,680,20,760],[20,770,120,740,110,900,15,900],[15,1160,90,1150,110,1240,20,1290],
    [560,1410,640,1440,600,1450,500,1450],[120,40,220,40,150,260,30,260],[730,310,1000,310,1100,450,960,430],
    [120,1330,180,1320,170,1400,15,1400],[210,720,270,720,260,790,130,850]
  ];
  quads.forEach(function (c) {
    var a = pt(c[0], c[1]), b = pt(c[2], c[3]), d = pt(c[4], c[5]), e = pt(c[6], c[7]);
    var w = (dist(a, b) + dist(e, d)) / 2, h = (dist(a, e) + dist(b, d)) / 2;
    function at(u, v) {
      return [0, 1].map(function (i) {
        return (1 - v) * ((1 - u) * a[i] + u * b[i]) + v * ((1 - u) * e[i] + u * d[i]);
      });
    }
    var wide = w > h, rows = Math.max(2, Math.round((wide ? h : w) / 36));
    for (var r = 0; r < rows; r++) {
      var pos = 0.02, len = wide ? w : h;
      while (pos < 0.97) {
        var step = (9 + rnd() * rnd() * 34) / len;
        var end = Math.min(0.99, pos + step);
        if (rnd() > 0.12) {
          var t = (r + 0.06 + rnd() * 0.12) / rows, s = (r + 0.94 - rnd() * 0.3) / rows, n = (s - t) * (0.15 + rnd() * 0.2), k = pos + (end - pos) * 0.5;
          var f = wide ? at : function (u, v) { return at(v, u); };
          var pts = rnd() > 0.5
            ? [f(pos, t), f(end, t), f(end, s), f(k, s), f(k, s - n), f(pos, s - n)]
            : [f(pos, t), f(end, t), f(end, s), f(pos, s)];
          if (step * len > 22) poly(lots, shift(pts, 2, 5), '#e4e4e4');
          poly(lots, pts, '#fff', '#b4b4b4');
        }
        pos = end + (rnd() > 0.7 ? 4 / len : 0);
      }
    }
  });
  var big = document.getElementById('blocks');
  [
    [720,500,790,570,840,640,790,650,740,620,730,640,795,710,690,850,640,800,625,825,670,865,605,955,625,980,700,890,740,925,765,900,720,855,780,780,850,835,868,825,800,750,845,690,895,705,920,675,870,630,940,540,1010,480,960,445,920,500,930,520,860,610],
    [270,560,330,650,340,630,325,585,380,615,392,595,330,560,420,490,405,465],[365,670,400,610,438,640,405,700],
    [205,1285,275,1195,380,1310,370,1340,350,1330,320,1388],[260,1280,285,1255,322,1300,300,1325],
    [135,1060,200,1080,220,1065,230,1080,205,1110,262,1170,240,1195,160,1120,145,1140],[135,1020,185,960,205,985,220,940,190,910,210,885,280,950,240,985,245,1030,200,1080,180,1040,150,1055],
    [265,890,310,845,350,885,305,930],[305,780,330,750,398,805,370,840],[1065,210,1155,55,1165,60,1130,170,1180,175,1190,95,1212,100,1180,200],
    [525,770,560,690,590,705,550,780],[550,640,590,575,620,590,575,670],[715,480,780,360,795,370,735,490],[515,460,570,370,585,380,530,475],
    [250,240,340,60,355,85,265,300],[200,100,280,130,265,165,195,120],[395,300,480,275,485,310,420,345],[150,330,200,230,220,250,180,330],
    [1610,60,1826,40,1720,160],[1696,890,1850,680,1930,720,1910,740,1880,735,1738,925],[1910,820,1946,760,2096,840,2070,900,1950,1060,2080,1120,2060,1160,1970,1110,1915,1050,1930,1020,1980,1040,2000,970,1950,930,1960,890,2010,900,1940,870],
    [2050,170,2400,300,2300,350],[2410,930,2460,840,2605,960,2560,1040],[2270,300,2320,340,2300,360,2190,280],[2000,470,2170,560,2140,500,2010,400],
    [1620,510,1700,480,1760,560,1720,600],[2730,200,2780,120,2850,180,2825,290],[2590,400,2650,330,2720,320,2790,330,2700,500]
  ].forEach(function (c) {
    var pts = [];
    for (var i = 0; i < c.length; i += 2) pts.push(pt(c[i], c[i + 1]));
    poly(big, shift(pts, 3, 8), '#dcdcdc');
    poly(big, pts, '#fff', '#aaa');
  });
})();
</script>
</body>
</html>
